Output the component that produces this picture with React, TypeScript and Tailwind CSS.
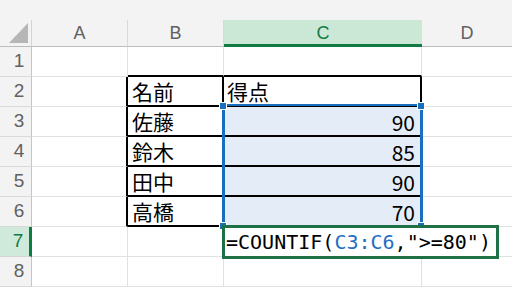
import React from "react";

const gl = "border-r border-b border-[#e1e1e1]";

export default function App() {
  const rows: { n: number; b?: string; c?: string }[] = [
    { n: 1 },
    { n: 2, b: "名前", c: "得点" },
    { n: 3, b: "佐藤", c: "90" },
    { n: 4, b: "鈴木", c: "85" },
    { n: 5, b: "田中", c: "90" },
    { n: 6, b: "高橋", c: "70" },
    { n: 7 },
    { n: 8 },
  ];
  return (
    <div
      className="relative w-[512px] h-[287px] overflow-hidden bg-white"
      style={{ fontFamily: '"Noto Sans CJK JP", "Noto Sans", sans-serif' }}
    >
      <div className="h-[20px] bg-[#f3f3f3]" />
      <div className="grid grid-cols-[32px_96px_96px_198px_90px] grid-rows-[27px_repeat(8,30px)]">
        {/* header row */}
        <div className="relative bg-[#f3f3f3] border-r border-b border-r-[#d4d4d4] border-b-[#bdbdbd]">
          <svg className="absolute left-[9px] top-[3px]" width="19" height="20" viewBox="0 0 19 20">
            <polygon points="19,0 19,20 0,20" fill="#b6b6b6" />
          </svg>
        </div>
        {["A", "B"].map((l) => (
          <div
            key={l}
            className="flex items-center justify-center bg-[#f3f3f3] border-r border-b border-r-[#d9d9d9] border-b-[#bdbdbd] text-[18px] text-[#616161]"
            style={{ fontFamily: '"Liberation Sans", Arial, sans-serif' }}
          >
            {l}
          </div>
        ))}
        <div
          className="flex items-center justify-center bg-[#cbe8d6] border-b-[3px] border-b-[#107c41] text-[18px] text-[#107c41] pt-[2px]"
          style={{ fontFamily: '"Liberation Sans", Arial, sans-serif' }}
        >
          C
        </div>
        <div
          className="flex items-center justify-center bg-[#f3f3f3] border-b border-b-[#bdbdbd] text-[18px] text-[#616161]"
          style={{ fontFamily: '"Liberation Sans", Arial, sans-serif' }}
        >
          D
        </div>

        {rows.map((r) => {
          const inTable = r.n >= 2 && r.n <= 6;
          const selRow = r.n === 7;
          const isNum = r.n >= 3 && r.n <= 6;
          return (
            <React.Fragment key={r.n}>
              <div
                className={`flex items-center justify-center pl-[7px] text-[19px] border-b ${
                  selRow
                    ? "bg-[#cfeadb] text-[#107c41] border-b-[#d4d4d4] border-r-[3px] border-r-[#107c41]"
                    : "bg-[#f3f3f3] text-[#616161] border-b-[#d9d9d9] border-r border-r-[#c6c6c6]"
                }`}
                style={{ fontFamily: '"Liberation Sans", Arial, sans-serif' }}
              >
                {r.n}
              </div>
              <div
                className={`border-b border-b-[#e1e1e1] ${
                  inTable ? "border-r-2 border-r-black" : "border-r border-r-[#e1e1e1]"
                }`}
              />
              <div
                className={`flex items-center pl-[4px] pt-[1px] text-[21px] text-black leading-none ${
                  inTable
                    ? "border-r-2 border-r-black border-b-2 border-b-black"
                    : r.n === 1
                    ? "border-r border-r-[#e1e1e1] border-b-2 border-b-black"
                    : gl
                }`}
              >
                {r.b}
              </div>
              <div
                className={`flex items-center text-[21px] text-black leading-none ${
                  isNum ? "justify-end pr-[5px] pt-[3px] bg-[#e4edf7]" : "pl-[3px] pt-[1px]"
                } ${
                  inTable
                    ? "border-r-2 border-r-black border-b-2 border-b-black"
                    : r.n === 1
                    ? "border-r border-r-[#e1e1e1] border-b-2 border-b-black"
                    : gl
                }`}
              >
                {r.c}
              </div>
              <div className="border-b border-b-[#e1e1e1]" />
            </React.Fragment>
          );
        })}
      </div>

      {/* selection range C3:C6 */}
      <div className="absolute left-[222px] top-[104px] w-[201px] h-[123px] border-x-[3px] border-y-2 border-[#1a6ec0]" />
      {[
        "left-[219px] top-[102px]",
        "left-[417px] top-[102px]",
        "left-[219px] top-[222px]",
        "left-[417px] top-[222px]",
      ].map((p) => (
        <div key={p} className={`absolute ${p} w-[8px] h-[8px] bg-[#1a6ec0] border border-white`} />
      ))}

      {/* editing cell C7 */}
      <div
        className="absolute left-[222px] top-[225px] w-[277px] h-[34px] border-[3px] border-[#1d7145] bg-white flex items-center pl-[1px] text-[20px] text-black whitespace-pre"
        style={{ fontFamily: '"DejaVu Sans Mono", "Liberation Mono", monospace' }}
      >
        =COUNTIF(<span className="text-[#1f6fc4]">C3:C6</span>,"&gt;=80")
      </div>
    </div>
  );
}
